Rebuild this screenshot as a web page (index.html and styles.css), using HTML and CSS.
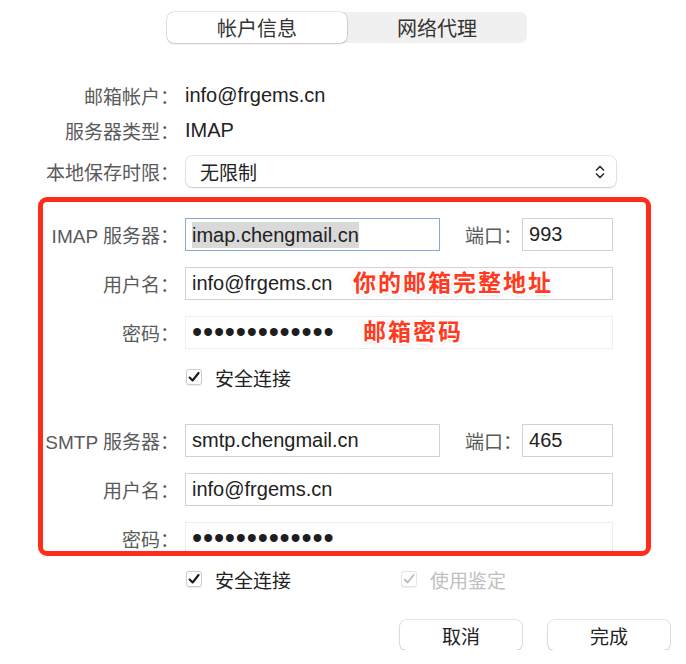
FILE: index.html
```html
<!DOCTYPE html>
<html lang="zh-CN">
<head>
  <meta charset="UTF-8" />
  <title>帐户信息</title>
  <link rel="stylesheet" href="styles.css">
</head>
<body>
  <div class="tabs">
    <div class="tab active">帐户信息</div>
    <div class="tab">网络代理</div>
  </div>

  <div class="info">
    <div class="info-row"><span class="label">邮箱帐户：</span><span class="value">info@frgems.cn</span></div>
    <div class="info-row"><span class="label">服务器类型：</span><span class="value">IMAP</span></div>
    <div class="info-row select-row">
      <span class="label">本地保存时限：</span>
      <div class="popup">
        <span>无限制</span>
        <svg class="chevrons" width="12" height="18" viewBox="0 0 12 18"><path d="M2.5 7 L6 3.5 L9.5 7 M2.5 11 L6 14.5 L9.5 11" fill="none" stroke="#333" stroke-width="1.7" stroke-linecap="round" stroke-linejoin="round"/></svg>
      </div>
    </div>
  </div>

  <div class="box">
    <div class="field-row">
      <span class="label">IMAP 服务器：</span>
      <div class="fields">
        <div class="input server focused"><span class="selected">imap.chengmail.cn</span></div>
        <span class="label port-label">端口：</span>
        <div class="input port">993</div>
      </div>
    </div>
    <div class="field-row">
      <span class="label">用户名：</span>
      <div class="input wide">info@frgems.cn<span class="note note-user">你的邮箱完整地址</span></div>
    </div>
    <div class="field-row">
      <span class="label">密码：</span>
      <div class="input wide secret"><span class="dots">•••••••••••••</span><span class="note note-pass">邮箱密码</span></div>
    </div>
    <div class="check-row">
      <label class="check">
        <span class="box-mark"><svg width="16" height="16" viewBox="0 0 16 16"><path d="M3 8.6 L6.4 12 L13.2 3.4" fill="none" stroke="#1a1a1a" stroke-width="2.4" stroke-linecap="round" stroke-linejoin="round"/></svg></span>
        安全连接
      </label>
    </div>
    <div class="field-row smtp">
      <span class="label">SMTP 服务器：</span>
      <div class="fields">
        <div class="input server">smtp.chengmail.cn</div>
        <span class="label port-label">端口：</span>
        <div class="input port">465</div>
      </div>
    </div>
    <div class="field-row">
      <span class="label">用户名：</span>
      <div class="input wide">info@frgems.cn</div>
    </div>
    <div class="field-row">
      <span class="label">密码：</span>
      <div class="input wide secret"><span class="dots">•••••••••••••</span></div>
    </div>
  </div>

  <div class="bottom-checks">
    <label class="check first">
      <span class="box-mark"><svg width="16" height="16" viewBox="0 0 16 16"><path d="M3 8.6 L6.4 12 L13.2 3.4" fill="none" stroke="#1a1a1a" stroke-width="2.4" stroke-linecap="round" stroke-linejoin="round"/></svg></span>
      安全连接
    </label>
    <label class="check disabled">
      <span class="box-mark"><svg width="16" height="16" viewBox="0 0 16 16"><path d="M3 8.6 L6.4 12 L13.2 3.4" fill="none" stroke="#bdbdbd" stroke-width="2.2" stroke-linecap="round" stroke-linejoin="round"/></svg></span>
      使用鉴定
    </label>
  </div>

  <div class="actions">
    <button class="button">取消</button>
    <button class="button">完成</button>
  </div>
</body>
</html>
```

FILE: styles.css
```css
body {
  margin: 0;
  padding-top: 12px;
  font-family: "Liberation Sans", "Noto Sans CJK SC", sans-serif;
  font-size: 19px;
  color: #222;
  background-color: #fff;
}
.tabs {
  display: flex;
  width: 360px;
  height: 31px;
  margin-left: 167px;
  background-color: #f0f0f0;
  border-radius: 7px;
}
.tab {
  flex: 1;
  display: flex;
  align-items: center;
  justify-content: center;
  font-size: 20px;
  color: #333;
}
.tab.active {
  background-color: #fff;
  border-radius: 7px;
  box-shadow: 0 0 0 0.5px rgba(0,0,0,0.18), 0 1px 2px rgba(0,0,0,0.15);
}
.label {
  padding-right: 6px;
  text-align: right;
  color: #5a5a5a;
  white-space: nowrap;
}
.value {
  font-size: 20px;
}
.info {
  margin-top: 35px;
}
.info-row {
  display: grid;
  grid-template-columns: 185px 1fr;
  align-items: center;
  height: 35px;
}
.select-row {
  height: 31px;
  margin-top: 8px;
}
.popup {
  display: flex;
  align-items: center;
  justify-content: space-between;
  width: 430px;
  height: 31px;
  margin-left: 1px;
  padding: 0 10px 0 14px;
  box-sizing: border-box;
  background-color: #fff;
  border-radius: 6px;
  box-shadow: 0 0 0 0.5px rgba(0,0,0,0.15), 0 1px 2px rgba(0,0,0,0.15);
}
.box {
  display: flex;
  flex-direction: column;
  gap: 16px;
  width: 613px;
  height: 359px;
  margin: 10px 0 0 38px;
  padding-top: 16px;
  box-sizing: border-box;
  border: 5px solid #ff2c1b;
  border-radius: 9px;
  overflow: hidden;
}
.field-row {
  display: grid;
  grid-template-columns: 142px auto;
  align-items: center;
  height: 33px;
  flex-shrink: 0;
}
.field-row.smtp {
  margin-top: 19px;
}
.fields {
  display: flex;
  align-items: center;
}
.input {
  position: relative;
  display: flex;
  align-items: center;
  height: 33px;
  padding: 0 6px;
  box-sizing: border-box;
  border: 1px solid #d2d2d2;
  background-color: #fff;
  font-size: 20px;
  white-space: nowrap;
}
.input.server {
  width: 255px;
}
.input.port {
  width: 91px;
}
.input.wide {
  width: 428px;
}
.input.focused {
  border-color: #86a9dc;
}
.input.secret {
  border-color: #eeeeee;
}
.selected {
  background-color: #d9d9d9;
  line-height: 26px;
}
.port-label {
  margin-left: 25px;
  padding-right: 0;
}
.dots {
  font-size: 29px;
  letter-spacing: 0.8px;
  line-height: 33px;
  color: #1e1e1e;
}
.note {
  position: absolute;
  top: 0;
  line-height: 31px;
  font-size: 23px;
  font-weight: bold;
  letter-spacing: 2px;
  color: #ff3a20;
  text-shadow: 2px 0 #fff, -2px 0 #fff, 0 2px #fff, 0 -2px #fff,
    1.5px 1.5px #fff, -1.5px -1.5px #fff, 1.5px -1.5px #fff, -1.5px 1.5px #fff,
    0 1px 4px rgba(0,0,0,0.35);
}
.note-user {
  left: 167px;
}
.note-pass {
  left: 177px;
}
.check-row {
  height: 24px;
  padding-left: 143px;
  flex-shrink: 0;
}
.check {
  display: flex;
  align-items: center;
  gap: 13px;
  height: 24px;
  color: #222;
}
.box-mark {
  display: flex;
  align-items: center;
  justify-content: center;
  width: 16px;
  height: 16px;
  box-sizing: border-box;
  border: 1px solid #cdcdcd;
  border-radius: 3px;
  background-color: #fff;
  box-shadow: 0 0.5px 1px rgba(0,0,0,0.08);
}
.check.disabled {
  color: #c0c0c0;
}
.check.disabled .box-mark {
  border-color: #e6e6e6;
}
.bottom-checks {
  display: flex;
  height: 24px;
  margin-top: 11px;
  padding-left: 186px;
}
.check.first {
  width: 215px;
}
.actions {
  display: flex;
  justify-content: flex-end;
  gap: 26px;
  margin-top: 29px;
  padding-right: 16px;
}
.button {
  width: 122px;
  height: 30px;
  padding: 0;
  font-family: inherit;
  font-size: 19px;
  color: #222;
  background-color: #fff;
  border: none;
  border-radius: 6px;
  box-shadow: 0 0 0 0.5px rgba(0,0,0,0.18), 0 1px 2px rgba(0,0,0,0.18);
}
```
